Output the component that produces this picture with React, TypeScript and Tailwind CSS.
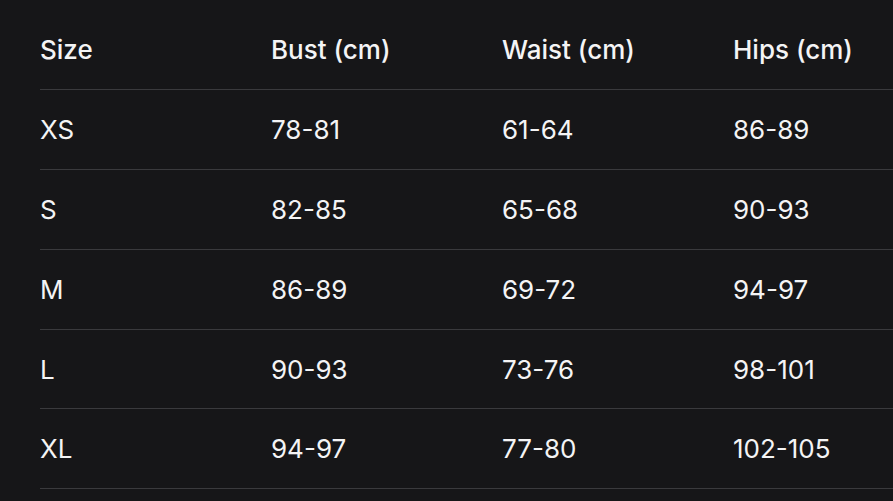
const rows = [
  ['XS', '78-81', '61-64', '86-89'],
  ['S', '82-85', '65-68', '90-93'],
  ['M', '86-89', '69-72', '94-97'],
  ['L', '90-93', '73-76', '98-101'],
  ['XL', '94-97', '77-80', '102-105'],
];

const headers = ['Size', 'Bust (cm)', 'Waist (cm)', 'Hips (cm)'];

export default function App() {
  return (
    <div className="min-h-[501px] w-full overflow-hidden bg-[#161618] pl-10 pt-[10px] font-['Inter',sans-serif] text-[#f4f4f5]">
      <table className="w-[924px] table-fixed border-collapse text-left text-[26px]">
        <thead>
          <tr className="h-[79.8px] border-b border-[#3a3a3d]">
            {headers.map((h) => (
              <th key={h} className="w-[231px] p-0 align-middle font-medium">
                {h}
              </th>
            ))}
          </tr>
        </thead>
        <tbody>
          {rows.map((r) => (
            <tr key={r[0]} className="h-[79.8px] border-b border-[#3a3a3d]">
              {r.map((c, i) => (
                <td key={i} className="p-0 align-middle font-normal">
                  {c}
                </td>
              ))}
            </tr>
          ))}
        </tbody>
      </table>
    </div>
  );
}
